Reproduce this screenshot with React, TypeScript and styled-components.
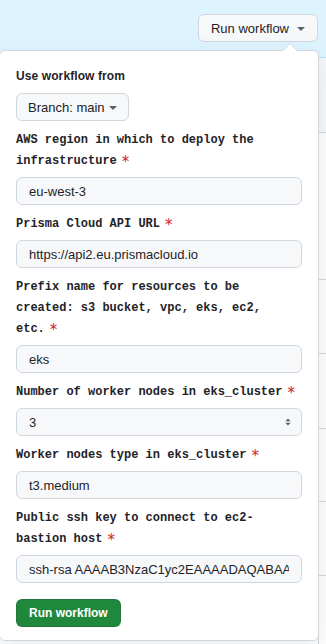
import React from 'react';
import styled, { createGlobalStyle } from 'styled-components';

const GlobalStyle = createGlobalStyle`
  html, body {
    margin: 0;
    padding: 0;
    background: #ffffff;
    overflow: hidden;
  }
  body {
    font-family: "Liberation Sans", Arial, sans-serif;
    color: #1f2328;
  }
`;

const Page = styled.div`
  width: 326px;
  height: 644px;
  position: relative;
  overflow: hidden;
`;

const Header = styled.div`
  height: 58px;
  box-sizing: border-box;
  background: #ddf4ff;
  border-bottom: 1px solid #b6e3ff;
  display: flex;
  justify-content: flex-end;
  align-items: flex-start;
  padding: 14px 8px 0 0;
`;

const DropdownWrap = styled.div`
  position: relative;
`;

const Button = styled.button<{ $primary?: boolean }>`
  display: inline-flex;
  align-items: center;
  height: 28px;
  box-sizing: border-box;
  border-radius: 6px;
  font-family: "Liberation Sans", Arial, sans-serif;
  cursor: pointer;
  border: 1px solid ${p => (p.$primary ? 'rgba(31,35,40,0.15)' : '#d0d7de')};
  background: ${p => (p.$primary ? '#1f883d' : '#f6f8fa')};
  color: ${p => (p.$primary ? '#ffffff' : '#1f2328')};
  font-size: ${p => (p.$primary ? '12px' : '13px')};
  font-weight: ${p => (p.$primary ? 700 : 400)};
  padding: ${p => (p.$primary ? '0 12px' : '0 8px 0 12px')};
  gap: 4px;
  line-height: 1;
`;

const SmallButton = styled(Button)`
  padding: 0 7px 0 11px;
  gap: 0;
`;

const Caret = () => (
  <svg width="16" height="16" viewBox="0 0 16 16" fill="#59636e">
    <path d="m4.427 7.427 3.396 3.396a.25.25 0 0 0 .354 0l3.396-3.396A.25.25 0 0 0 11.396 7H4.604a.25.25 0 0 0-.177.427Z" />
  </svg>
);

const Popover = styled.div`
  position: absolute;
  top: calc(100% + 8px);
  right: -1px;
  width: 320px;
  box-sizing: border-box;
  background: #ffffff;
  border: 1px solid #d0d7de;
  border-radius: 6px;
  box-shadow: 0 8px 24px rgba(140, 149, 159, 0.2);
  padding: 15px 16px 13px;
  z-index: 5;

  &::before,
  &::after {
    content: '';
    position: absolute;
    border-style: solid;
    border-color: transparent;
  }
  &::before {
    top: -16px;
    right: 20px;
    border-width: 8px;
    border-bottom-color: #d0d7de;
  }
  &::after {
    top: -14px;
    right: 21px;
    border-width: 7px;
    border-bottom-color: #ffffff;
  }
`;

const SourceLabel = styled.div`
  font-size: 12px;
  font-weight: 700;
  letter-spacing: 0.1px;
  line-height: 20px;
  margin-bottom: 7px;
`;

const Group = styled.div`
  margin-top: 9px;
`;

const Label = styled.label`
  display: block;
  font-family: "Liberation Mono", "DejaVu Sans Mono", monospace;
  font-size: 12px;
  font-weight: 700;
  line-height: 21px;
  margin-bottom: 5px;
`;

const Tail = styled.span`
  white-space: nowrap;
`;

const Required = styled.span`
  color: #cf222e;
  font-family: "DejaVu Sans", sans-serif;
  font-size: 15px;
  font-weight: 400;
  line-height: 15px;
  margin-left: 5px;
  vertical-align: -3px;
`;

const Input = styled.input`
  display: block;
  width: 100%;
  height: 28px;
  box-sizing: border-box;
  padding: 0 12px;
  border: 1px solid #d0d7de;
  border-radius: 6px;
  background: #f6f8fa;
  color: #1f2328;
  font-family: "Liberation Sans", Arial, sans-serif;
  font-size: 13px;
  outline: none;
`;

const Select = styled.div`
  display: flex;
  align-items: center;
  justify-content: space-between;
  height: 28px;
  box-sizing: border-box;
  padding: 0 5px 0 12px;
  border: 1px solid #d0d7de;
  border-radius: 6px;
  background: #f6f8fa;
  font-size: 13px;
`;

const SubmitRow = styled.div`
  margin-top: 16px;
`;

const RunsList = styled.div`
  margin-left: 318px;
  border-left: 1px solid #d0d7de;
`;

const RunRow = styled.div<{ $h: number; $head?: boolean }>`
  height: ${p => p.$h}px;
  box-sizing: border-box;
  border-bottom: 1px solid #d0d7de;
  background: ${p => (p.$head ? '#f6f8fa' : '#ffffff')};
`;

// label text is split so the last word stays glued to the required mark
const fields = [
  { label: 'AWS region in which to deploy the ', last: 'infrastructure', value: 'eu-west-3' },
  { label: 'Prisma Cloud API ', last: 'URL', value: 'https://api2.eu.prismacloud.io' },
  { label: 'Prefix name for resources to be created: s3 bucket, vpc, eks, ec2, ', last: 'etc.', value: 'eks' },
  { label: 'Number of worker nodes in ', last: 'eks_cluster', value: '3', select: true },
  { label: 'Worker nodes type in ', last: 'eks_cluster', value: 't3.medium' },
  {
    label: 'Public ssh key to connect to ec2-',
    last: 'bastion host',
    value: 'ssh-rsa AAAAB3NzaC1yc2EAAAADAQABAAACAQDc7m2f9x',
  },
];

const rows = [75, 147, 74, 75, 73, 74, 80];

const App: React.FC = () => {
  return (
    <Page>
      <GlobalStyle />
      <Header>
        <DropdownWrap>
          <Button>
            Run workflow
            <Caret />
          </Button>
          <Popover>
            <SourceLabel>Use workflow from</SourceLabel>
            <SmallButton>
              Branch: main
              <Caret />
            </SmallButton>
            {fields.map(f => (
              <Group key={f.label}>
                <Label>
                  {f.label}
                  <Tail>
                    {f.last}
                    <Required>*</Required>
                  </Tail>
                </Label>
                {f.select ? (
                  <Select>
                    <span>{f.value}</span>
                    <svg width="16" height="16" viewBox="0 0 16 16" fill="#59636e">
                      <path d="M5.4 7.3 8 4.4l2.6 2.9Z" />
                      <path d="M5.4 8.7 8 11.6l2.6-2.9Z" />
                    </svg>
                  </Select>
                ) : (
                  <Input readOnly value={f.value} />
                )}
              </Group>
            ))}
            <SubmitRow>
              <Button $primary>Run workflow</Button>
            </SubmitRow>
          </Popover>
        </DropdownWrap>
      </Header>
      <RunsList>
        {rows.map((h, i) => (
          <RunRow key={i} $h={h} $head={i === 0} />
        ))}
      </RunsList>
    </Page>
  );
};

export default App;
